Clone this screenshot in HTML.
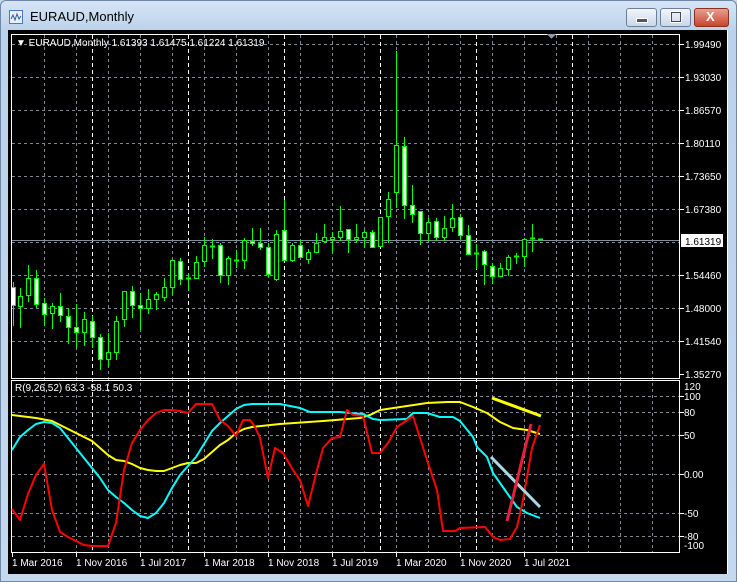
<!DOCTYPE html>
<html><head><meta charset="utf-8"><style>
html,body{margin:0;padding:0;width:737px;height:582px;overflow:hidden;background:#c4d7ec}
.win{position:absolute;left:0;top:0;width:735px;height:580px;border:1px solid #6d88a8;border-radius:6px 6px 0 0;background:linear-gradient(#d6e5f5,#bcd2ea 30px,#c4d8ee)}
.title{position:absolute;left:30px;top:9px;font:13px "Liberation Sans",sans-serif;color:#000}
.btn{position:absolute;top:8px;height:17px;border:1px solid #6b7f99;border-radius:3px;background:linear-gradient(#f2f6fb,#c9d7e8)}
svg{position:absolute;left:0;top:0}
text{font-family:"Liberation Sans",sans-serif;font-size:10px;fill:#fff}
</style></head><body>
<div class="win"></div>
<svg width="14" height="14" style="left:9px;top:10px" viewBox="0 0 14 14"><rect x="0.5" y="0.5" width="13" height="13" fill="#e8f0fa" stroke="#4a78b8"/><path d="M2 9 L4 5 L6 10 L8 4 L10 9 L12 6" stroke="#2a5aa8" fill="none"/></svg>
<div class="title">EURAUD,Monthly</div>
<div class="btn" style="left:626px;width:29px"><div style="position:absolute;left:9px;top:9px;width:10px;height:3px;background:#556;border:1px solid #fff"></div></div>
<div class="btn" style="left:660px;width:29px"><div style="position:absolute;left:10px;top:3px;width:8px;height:8px;border:1px solid #445;outline:1px solid #fff"></div></div>
<div class="btn" style="left:694px;width:33px;background:linear-gradient(#e8a090,#c8452f);border-color:#8a3020"><div style="position:absolute;left:11px;top:0px;font:bold 13px 'Liberation Sans',sans-serif;color:#fff">X</div></div>
<svg width="737" height="582" shape-rendering="crispEdges">
<rect x="8" y="30" width="720" height="544" fill="#000"/>
<line x1="727.5" y1="30" x2="727.5" y2="574" stroke="#fff"/>
<g stroke="#7a8898" stroke-dasharray="3,3">
<path d="M12 44.5H680M12 77.5H680M12 110.5H680M12 143.5H680M12 176.5H680M12 209.5H680M12 242.5H680M12 275.5H680M12 308.5H680M12 341.5H680"/>
<path d="M12 396.5H680M12 412.5H680M12 435.5H680M12 474.5H680M12 513.5H680M12 536.5H680"/>
<path d="M44.5 35V552M76.5 35V552M108.5 35V552M140.5 35V552M172.5 35V552M204.5 35V552M236.5 35V552M268.5 35V552M300.5 35V552M332.5 35V552M364.5 35V552M396.5 35V552M428.5 35V552M460.5 35V552M492.5 35V552M524.5 35V552M556.5 35V552M588.5 35V552M620.5 35V552M652.5 35V552"/>
</g>
<g stroke="#fff" stroke-dasharray="4,3">
<path d="M92.5 35V552M188.5 35V552M284.5 35V552M380.5 35V552M476.5 35V552M572.5 35V552"/>
</g>
<line x1="11" y1="240.5" x2="680" y2="240.5" stroke="#8090a0"/>
<g stroke="#00ff00" fill="none">
<path d="M13.5 282V326M20.5 288V328M28.5 265V302M36.5 270V308M44.5 298V326M52.5 303V329M60.5 293V322M68.5 308V344M76.5 304V348M84.5 312V346M92.5 316V348M100.5 334V370M108.5 333V367M116.5 316V360M124.5 291V327M132.5 286V318M140.5 293V330M148.5 289V314M156.5 292V310M164.5 278V301M172.5 260V295M180.5 258V285M188.5 273V291M196.5 256V279M204.5 237V267M212.5 239V259M220.5 243V283M228.5 256V285M236.5 250V268M244.5 238V269M252.5 228V246M260.5 228V250M268.5 243V277M276.5 230V281M284.5 200V260M292.5 243V262M300.5 240V258M308.5 249V264M316.5 233V253M324.5 224V243M332.5 232V253M340.5 206V241M348.5 229V253M356.5 224V243M364.5 230V248M372.5 230V248M380.5 217V246M388.5 192V243M396.5 51V208M404.5 137V219M412.5 185V223M420.5 211V245M428.5 218V241M436.5 218V241M444.5 216V241M452.5 204V232M460.5 214V239M468.5 225V255M476.5 244V269M484.5 250V285M492.5 263V284M500.5 263V277M508.5 255V276M516.5 253V264M524.5 238V267M532.5 224V252"/>
<path d="M186 278.5H191M210 246.5H215M234 260.5H239M474 253.5H479M514 256.5H519M530 238.5H535M538 239.5H543" stroke-width="2"/>
</g>
<g stroke="#00ff00" fill="#000">
<rect x="18.5" y="296.5" width="4" height="10"/><rect x="26.5" y="278.5" width="4" height="17"/><rect x="50.5" y="306.5" width="4" height="7"/><rect x="82.5" y="319.5" width="4" height="13"/><rect x="106.5" y="352.5" width="4" height="7"/><rect x="114.5" y="321.5" width="4" height="31"/><rect x="122.5" y="291.5" width="4" height="28"/><rect x="146.5" y="299.5" width="4" height="9"/><rect x="154.5" y="294.5" width="4" height="5"/><rect x="162.5" y="287.5" width="4" height="10"/><rect x="170.5" y="260.5" width="4" height="27"/><rect x="194.5" y="262.5" width="4" height="16"/><rect x="202.5" y="245.5" width="4" height="16"/><rect x="226.5" y="258.5" width="4" height="17"/><rect x="242.5" y="240.5" width="4" height="20"/><rect x="274.5" y="234.5" width="4" height="45"/><rect x="290.5" y="245.5" width="4" height="15"/><rect x="306.5" y="252.5" width="4" height="7"/><rect x="314.5" y="243.5" width="4" height="9"/><rect x="322.5" y="237.5" width="4" height="4"/><rect x="330.5" y="237.5" width="4" height="2"/><rect x="338.5" y="231.5" width="4" height="6"/><rect x="354.5" y="237.5" width="4" height="2"/><rect x="362.5" y="232.5" width="4" height="5"/><rect x="378.5" y="217.5" width="4" height="29"/><rect x="386.5" y="199.5" width="4" height="17"/><rect x="394.5" y="145.5" width="4" height="47"/><rect x="426.5" y="222.5" width="4" height="11"/><rect x="442.5" y="228.5" width="4" height="9"/><rect x="450.5" y="218.5" width="4" height="9"/><rect x="498.5" y="268.5" width="4" height="8"/><rect x="506.5" y="257.5" width="4" height="12"/><rect x="522.5" y="239.5" width="4" height="17"/>
</g>
<g stroke="#00ff00" fill="#fff">
<rect x="11.5" y="287.5" width="4" height="18"/><rect x="34.5" y="278.5" width="4" height="26"/><rect x="42.5" y="303.5" width="4" height="11"/><rect x="58.5" y="306.5" width="4" height="9"/><rect x="66.5" y="316.5" width="4" height="11"/><rect x="74.5" y="327.5" width="4" height="5"/><rect x="90.5" y="321.5" width="4" height="16"/><rect x="98.5" y="337.5" width="4" height="22"/><rect x="130.5" y="291.5" width="4" height="14"/><rect x="138.5" y="305.5" width="4" height="3"/><rect x="178.5" y="261.5" width="4" height="18"/><rect x="218.5" y="245.5" width="4" height="30"/><rect x="250.5" y="241.5" width="4" height="2"/><rect x="258.5" y="243.5" width="4" height="4"/><rect x="266.5" y="247.5" width="4" height="27"/><rect x="282.5" y="230.5" width="4" height="30"/><rect x="298.5" y="245.5" width="4" height="12"/><rect x="346.5" y="229.5" width="4" height="10"/><rect x="370.5" y="232.5" width="4" height="15"/><rect x="402.5" y="146.5" width="4" height="59"/><rect x="410.5" y="205.5" width="4" height="9"/><rect x="418.5" y="211.5" width="4" height="22"/><rect x="434.5" y="221.5" width="4" height="16"/><rect x="458.5" y="217.5" width="4" height="18"/><rect x="466.5" y="235.5" width="4" height="19"/><rect x="482.5" y="251.5" width="4" height="13"/><rect x="490.5" y="266.5" width="4" height="10"/>
</g>
<rect x="11.5" y="34.5" width="668" height="344" fill="none" stroke="#fff"/>
<rect x="11.5" y="380.5" width="668" height="172" fill="none" stroke="#fff"/>
<path d="M547 34H556L551.5 39Z" fill="#8a9aac"/>
<g shape-rendering="auto" fill="none" stroke-width="2" stroke-linejoin="round">
<polyline stroke="#ffff00" points="12,415 20,416 36,418 52,421 60,425 76,433 92,441 100,448 108,455 116,460 124,461 132,464 140,468 148,470 156,471 164,471 172,468 180,465 188,463 196,463 204,459 212,452 220,445 228,440 236,433 244,429 252,427 280,424 323,421 360,418 370,415 380,410 407,406 427,403 447,402 460,402 473,407 487,413 500,422 513,428 527,430 540,434"/>
<polyline stroke="#00ffff" points="12,450 20,437 28,430 36,424 44,422 52,423 60,428 68,438 76,448 84,458 92,468 100,478 108,490 116,497 124,503 132,510 140,516 148,518 156,513 164,503 172,488 180,475 188,466 196,457 204,444 212,431 220,423 228,416 236,409 244,405 252,404 280,404 300,408 310,412 340,412 350,413 363,414 373,419 380,420 407,419 413,413 427,413 440,417 453,417 460,421 473,437 477,447 487,457 493,473 507,493 517,507 527,513 540,518"/>
<polyline stroke="#ff0000" points="12,509 20,520 28,494 36,475 44,464 52,510 60,532 68,537 76,541 84,545 92,546 100,546 108,546 116,523 124,470 132,443 140,430 148,420 156,413 164,410 172,410 180,411 188,413 196,404 204,404 212,404 220,420 228,426 236,436 243,420 250,420 255,427 260,438 268,478 275,448 283,453 293,470 300,480 308,506 317,470 323,448 332,438 340,437 347,410 353,415 363,416 372,453 380,453 388,443 397,427 413,416 427,460 437,490 443,531 455,531 460,528 485,527 493,537 500,540 510,539 517,527 523,500 532,448 540,425"/>
<g stroke-width="3" stroke-linecap="butt">
<line x1="492" y1="398" x2="541" y2="416" stroke="#ffff00"/>
<line x1="491" y1="457" x2="540" y2="507" stroke="#add8e6"/>
<line x1="507" y1="521" x2="531" y2="424" stroke="#e81e3c"/>
</g>
</g>
<g stroke="#fff"><path d="M680 44.5H684M680 77.5H684M680 110.5H684M680 143.5H684M680 176.5H684M680 209.5H684M680 275.5H684M680 308.5H684M680 341.5H684M680 374.5H684M680 396.5H684M680 412.5H684M680 435.5H684M680 474.5H684M680 513.5H684M680 536.5H684M12.5 552V557M76.5 552V557M140.5 552V557M204.5 552V557M268.5 552V557M332.5 552V557M396.5 552V557M460.5 552V557M524.5 552V557"/></g>
<rect x="681" y="234" width="42" height="13" fill="#fff"/>
<text x="16" y="46">▼ EURAUD,Monthly  1.61393 1.61475 1.61224 1.61319</text>
<text x="15" y="391">R(9,26,52) 63.3 -58.1 50.3</text>
<g>
<text x="685" y="48">1.99490</text><text x="685" y="81">1.93030</text><text x="685" y="114">1.86570</text><text x="685" y="147">1.80110</text><text x="685" y="180">1.73650</text><text x="685" y="213">1.67380</text><text x="685" y="245" style="fill:#000">1.61319</text><text x="685" y="279">1.54460</text><text x="685" y="312">1.48000</text><text x="685" y="345">1.41540</text><text x="685" y="378">1.35270</text>
<text x="684" y="390">120</text><text x="684" y="400">100</text><text x="684" y="416">80</text><text x="684" y="439">50</text><text x="684" y="478">0.00</text><text x="684" y="517">-50</text><text x="684" y="540">-80</text><text x="684" y="549">-100</text>
<text x="12" y="566">1 Mar 2016</text><text x="76" y="566">1 Nov 2016</text><text x="140" y="566">1 Jul 2017</text><text x="204" y="566">1 Mar 2018</text><text x="268" y="566">1 Nov 2018</text><text x="332" y="566">1 Jul 2019</text><text x="396" y="566">1 Mar 2020</text><text x="460" y="566">1 Nov 2020</text><text x="524" y="566">1 Jul 2021</text>
</g>
</svg>
</body></html>
